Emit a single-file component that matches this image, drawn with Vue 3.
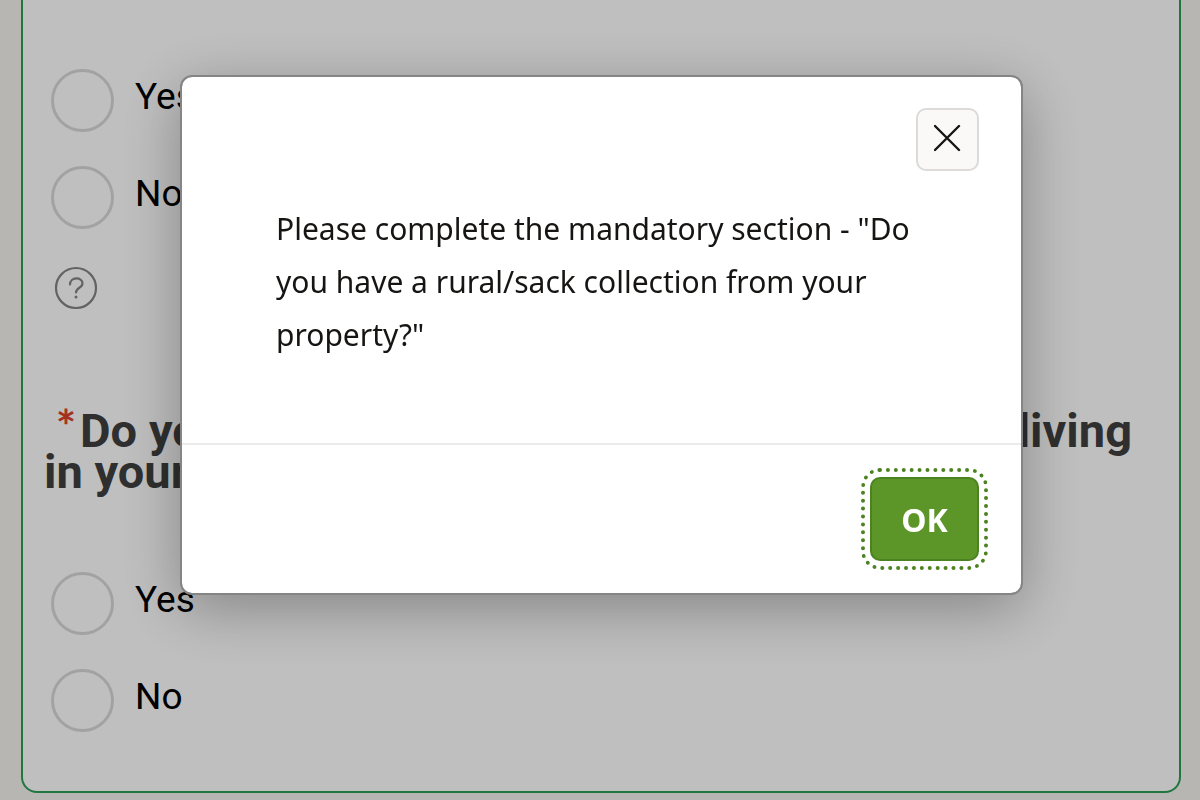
<script setup>
import { ref } from 'vue'

const answers = ['Yes', 'No']
const collection = ref('')
const household = ref('')
</script>

<template>
  <div class="page">
    <main class="card">
      <fieldset class="options" aria-label="Rural or sack collection">
        <label v-for="a in answers" :key="a" class="option">
          <input v-model="collection" type="radio" name="collection" :value="a" />
          <span>{{ a }}</span>
        </label>
      </fieldset>
      <button class="help" type="button" aria-label="Help">
        <svg viewBox="0 0 44 44" fill="none" stroke="currentColor" stroke-width="2.200">
          <circle cx="22" cy="22" r="20" />
          <path d="M16 18.500C16 10.500 28.500 10.500 28.500 17.500C28.500 22 22 21.500 22 26.500" stroke-linecap="round" />
          <circle cx="22" cy="31" r="1.500" fill="currentColor" stroke="none" />
        </svg>
      </button>
      <h2 id="household-title" class="question">
        <span class="required">*</span>Do you have seven or more people currently living in your household?
      </h2>
      <fieldset class="options" aria-labelledby="household-title">
        <label v-for="a in answers" :key="a" class="option">
          <input v-model="household" type="radio" name="household" :value="a" />
          <span>{{ a }}</span>
        </label>
      </fieldset>
    </main>

    <div class="overlay">
      <section class="dialog" role="alertdialog" aria-modal="true" aria-describedby="dialog-message">
        <header class="dialog-head">
          <button class="close" type="button" aria-label="Close">
            <svg viewBox="0 0 28 28" fill="none" stroke="currentColor" stroke-width="2.400" stroke-linecap="round">
              <path d="M1 2L25 26M25 2L1 26" />
            </svg>
          </button>
        </header>
        <p id="dialog-message" class="message">
          Please complete the mandatory section - "Do you have a rural/sack collection from your property?"
        </p>
        <footer class="dialog-foot">
          <button class="ok" type="button">OK</button>
        </footer>
      </section>
    </div>
  </div>
</template>

<style>
body {
  background: #f5f3ee;
}
</style>

<style scoped>
* {
  box-sizing: border-box;
}
.page {
  height: 100vh;
  overflow: hidden;
  padding: 0 19px 0 21px;
  font-family: Roboto, sans-serif;
}
.card {
  padding: 69px 28px 59px;
  background: #fff;
  border: 2px solid #2a9f54;
  border-top: 0;
  border-radius: 0 0 16px 16px;
}
.options {
  display: grid;
  gap: 34px;
  margin: 0;
  padding: 0;
  border: 0;
}
.option {
  display: flex;
  align-items: center;
  gap: 21px;
  font-size: 37px;
  line-height: 55px;
  color: #000;
}
.option span {
  padding-bottom: 8px;
}
.option input {
  appearance: none;
  width: 63px;
  height: 63px;
  margin: 0;
  border: 3px solid #d9d9d9;
  border-radius: 50%;
}
.help {
  display: block;
  width: 44px;
  height: 44px;
  margin: 37px 0 0 3px;
  padding: 0;
  border: 0;
  background: none;
  color: #858585;
}
.help svg {
  display: block;
}
.question {
  margin: 100px 19px 80px -7px;
  font-size: 47px;
  font-weight: 700;
  line-height: 41px;
  text-align: justify;
  color: #3f3f3f;
}
.required {
  margin: 0 6px 0 14px;
  font-family: "DejaVu Sans", sans-serif;
  font-size: 32px;
  font-weight: 400;
  line-height: 0;
  vertical-align: 15px;
  color: #dc3f28;
  -webkit-text-stroke: 1px #dc3f28;
}
.overlay {
  position: fixed;
  inset: 0;
  display: flex;
  justify-content: center;
  align-items: flex-start;
  padding: 75px 0 0 3px;
  background: rgba(0, 0, 0, 0.25);
}
.dialog {
  width: 843px;
  max-width: 90%;
  border: 2px solid #858585;
  border-radius: 12px;
  background: #fff;
  background-clip: padding-box;
  box-shadow: 0 14px 60px rgba(0, 0, 0, 0.3);
  font-family: "Noto Sans", sans-serif;
  color: #161513;
}
.dialog-head {
  display: flex;
  justify-content: flex-end;
  padding: 31px 42px 0;
}
.close {
  display: grid;
  place-items: center;
  width: 63px;
  height: 63px;
  padding: 0 0 4px;
  border: 2px solid #dcdbd9;
  border-radius: 10px;
  background: #faf9f7;
  color: #161513;
}
.close svg {
  width: 28px;
}
.message {
  margin: 0;
  padding: 31px 94px 82px;
  font-size: 30px;
  line-height: 53px;
}
.dialog-foot {
  display: flex;
  justify-content: flex-end;
  padding: 32px 42px;
  border-top: 2px solid #ebebeb;
}
.ok {
  width: 109px;
  height: 84px;
  padding: 0;
  border: 2px solid #4c8320;
  border-radius: 10px;
  outline: 4px dotted #4c8320;
  outline-offset: 5px;
  background: #5c9628;
  color: #fff;
  font-family: "Noto Sans", sans-serif;
  font-size: 32px;
  font-weight: 700;
}
</style>
